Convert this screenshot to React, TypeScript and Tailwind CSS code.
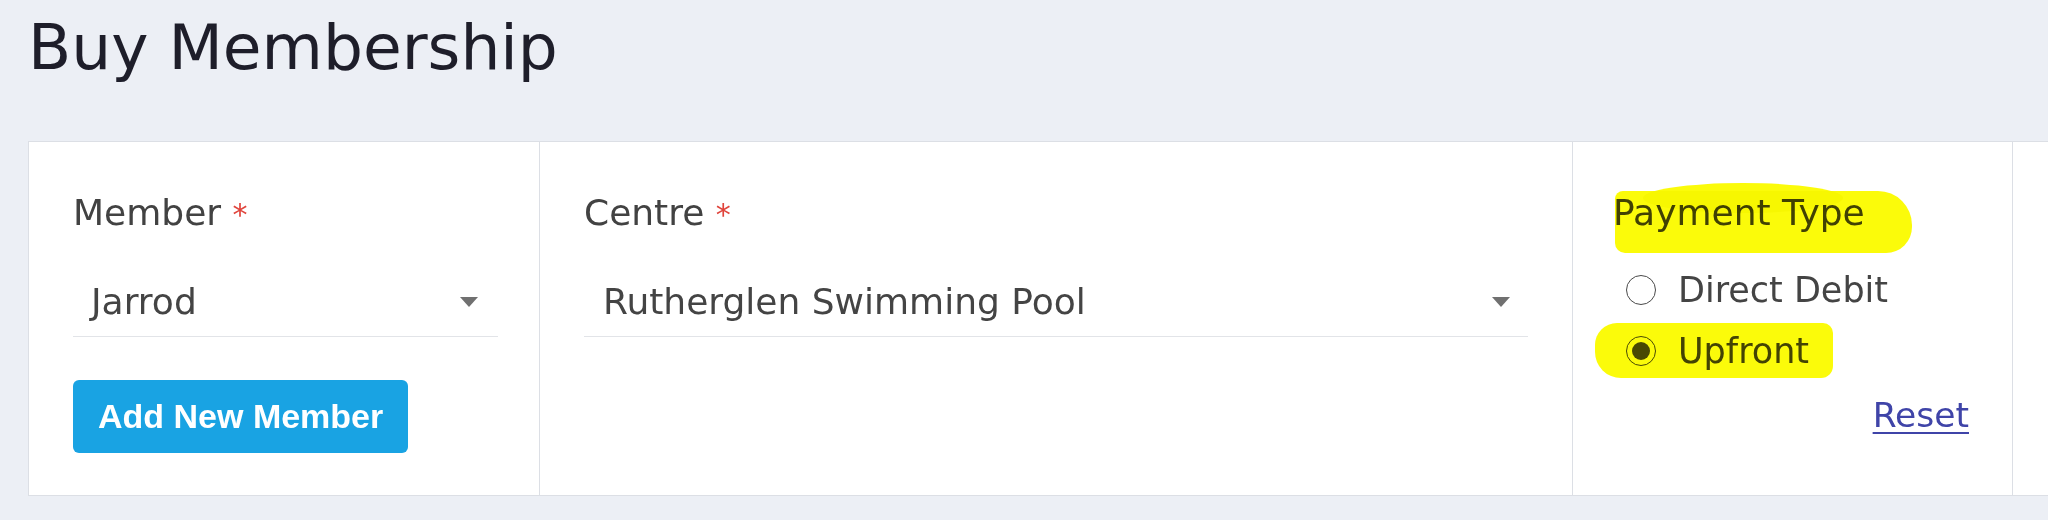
import { useState } from "react";

const poppinsLike = "font-['DejaVu_Sans',sans-serif]";

function Caret() {
  return (
    <svg width="18" height="10" viewBox="0 0 18 10" className="shrink-0">
      <path d="M0 0 L18 0 L9 10 Z" fill="#707070" />
    </svg>
  );
}

function Radio({ checked }: { checked: boolean }) {
  return (
    <span className="w-[30px] h-[30px] rounded-full border-[1.5px] border-[#4a4a4a] bg-white flex items-center justify-center shrink-0">
      {checked && <span className="w-[18px] h-[18px] rounded-full bg-[#4a4a4a]" />}
    </span>
  );
}

export default function App() {
  const [payment, setPayment] = useState("upfront");

  return (
    <div className={`w-full min-h-[520px] overflow-hidden bg-[#eceff5] pt-[12px] pl-[28px] ${poppinsLike}`}>
      <h1 className="text-[63px] leading-[72px] text-[#1e1e2a] font-normal">Buy Membership</h1>

      <div className="mt-[57px] flex w-[2100px] bg-white border border-[#dcdfe5]">
        {/* Member */}
        <div className="w-[511px] shrink-0 border-r border-[#dcdfe5] pt-[50px] pb-[42px] pl-[44px] pr-[41px]">
          <div className="text-[36px] leading-[42px] text-[#424242]">
            Member <span className="text-[30px] text-[#e0443c]">*</span>
          </div>
          <div className="mt-[45px] flex items-center justify-between border-b border-[#e2e4e8] pb-[13px] pl-[18px] pr-[20px]">
            <span className="text-[36px] leading-[42px] text-[#444444]">Jarrod</span>
            <Caret />
          </div>
          <button className="mt-[43px] w-[335px] h-[73px] rounded-[6px] bg-[#19a3e3] pl-[25px] text-left font-['Liberation_Sans',Arial,sans-serif] font-bold text-[34px] text-white">
            Add New Member
          </button>
        </div>

        {/* Centre */}
        <div className="w-[1033px] shrink-0 border-r border-[#dcdfe5] pt-[50px] pl-[44px] pr-[44px]">
          <div className="text-[36px] leading-[42px] text-[#424242]">
            Centre <span className="text-[30px] text-[#e0443c]">*</span>
          </div>
          <div className="mt-[45px] flex items-center justify-between border-b border-[#e2e4e8] pb-[13px] pl-[19px] pr-[18px]">
            <span className="text-[36px] leading-[42px] text-[#444444]">Rutherglen Swimming Pool</span>
            <Caret />
          </div>
        </div>

        {/* Payment type */}
        <div className="w-[440px] shrink-0 border-r border-[#dcdfe5] pt-[50px] pl-[40px] pr-[43px] flex flex-col">
          <div className="relative text-[36px] leading-[42px] text-[#424242]">
            Payment Type
            <span className="absolute left-[2px] top-[-1px] w-[297px] h-[62px] rounded-[8px_34px_26px_10px] bg-[#fbfb0a] mix-blend-multiply pointer-events-none" />
            <span className="absolute left-[30px] top-[-9px] w-[200px] h-[30px] rounded-[50%] bg-[#fbfb0a] mix-blend-multiply pointer-events-none" />
          </div>
          <label
            className="mt-[35px] flex items-center gap-[22px] pl-[13px] cursor-pointer"
            onClick={() => setPayment("direct")}
          >
            <Radio checked={payment === "direct"} />
            <span className="text-[35px] leading-[42px] text-[#444444]">Direct Debit</span>
          </label>
          <label
            className="relative mt-[19px] flex items-center gap-[22px] pl-[13px] cursor-pointer"
            onClick={() => setPayment("upfront")}
          >
            <Radio checked={payment === "upfront"} />
            <span className="text-[35px] leading-[42px] text-[#444444]">Upfront</span>
            <span className="absolute left-[-18px] top-[-7px] w-[238px] h-[55px] rounded-[22px_10px_12px_26px] bg-[#fbfb0a] mix-blend-multiply pointer-events-none" />
          </label>
          <div className="mt-[22px] flex justify-end">
            <a href="#" className="text-[34.5px] leading-[42px] text-[#3f44a8] underline decoration-2 underline-offset-[5px]">
              Reset
            </a>
          </div>
        </div>

        <div className="w-[120px] shrink-0" />
      </div>
    </div>
  );
}
